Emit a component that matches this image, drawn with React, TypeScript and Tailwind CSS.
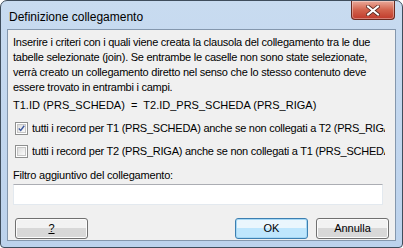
import React from 'react';

const body = { fontFamily: '"Liberation Sans", Arial, sans-serif' };

function CloseButton() {
    return (
        <div className="w-[44px] h-[19px] rounded-b-[4px] border border-[#6b2a1f] border-t-0 bg-gradient-to-b from-[#e9a99a] via-[#d2624c] to-[#c0392b] flex items-center justify-center shadow-[inset_0_0_0_1px_rgba(255,255,255,0.35)]">
            <svg width="14" height="11" viewBox="0 0 14 11">
                <path d="M2 1.5 L12 9.5 M12 1.5 L2 9.5" stroke="#5a2a22" strokeWidth="3.6" strokeLinecap="square" />
                <path d="M2 1.5 L12 9.5 M12 1.5 L2 9.5" stroke="#ffffff" strokeWidth="2" strokeLinecap="square" />
            </svg>
        </div>
    );
}

function Checkbox({ checked }: { checked?: boolean }) {
    return (
        <div className="w-[13px] h-[13px] shrink-0 border border-[#8e8f8f] bg-white p-[1px]">
            <div className="w-full h-full border border-[#c6c6c6] bg-gradient-to-br from-[#dcdcdc] to-[#fbfbfb] flex items-center justify-center">
                {checked && (
                    <svg width="9" height="9" viewBox="0 0 9 9">
                        <path d="M1 4.5 L3.5 7 L8 1" fill="none" stroke="#3e5aa0" strokeWidth="1.8" />
                    </svg>
                )}
            </div>
        </div>
    );
}

function Button({ children, primary }: { children: React.ReactNode; primary?: boolean }) {
    return (
        <div
            className={`w-[73px] h-[21px] rounded-[3px] border flex items-center justify-center text-[11px] text-black ${
                primary
                    ? 'border-[#3c7fb1] bg-gradient-to-b from-[#eaf6fd] from-50% to-[#bee6fd] to-50% shadow-[inset_0_0_0_1px_#a6d8f5]'
                    : 'border-[#707070] bg-gradient-to-b from-[#f2f2f2] from-50% to-[#d8d8d8] to-50% shadow-[inset_0_0_0_1px_#fcfcfc]'
            }`}
            style={body}
        >
            {children}
        </div>
    );
}

export default function App() {
    return (
        <div className="w-[403px] h-[248px] rounded-t-[7px] rounded-b-[4px] border border-[#3f4d5c] bg-gradient-to-b from-[#c8dbf0] to-[#bcd2ec] flex flex-col overflow-hidden">
            <div className="h-[28px] shrink-0 flex items-start justify-between pl-[8px] pr-[7px]">
                <div className="pt-[7px] text-[12px] text-black" style={body}>Definizione collegamento</div>
                <CloseButton />
            </div>
            <div className="mx-[6px] mb-[6px] flex-1 border border-[#8497ad] bg-[#f0f0f0] flex flex-col px-[5px] pt-[5px] text-[11px] text-black" style={body}>
                <p className="leading-[15px] tracking-[-0.25px] whitespace-nowrap">
                    Inserire i criteri con i quali viene creata la clausola del collegamento tra le due<br />
                    tabelle selezionate (join). Se entrambe le caselle non sono state selezionate,<br />
                    verrà creato un collegamento diretto nel senso che lo stesso contenuto deve<br />
                    essere trovato in entrambi i campi.
                </p>
                <div className="mt-[3px] leading-[15px] whitespace-pre">T1.ID (PRS_SCHEDA)  =  T2.ID_PRS_SCHEDA (PRS_RIGA)</div>
                <div className="mt-[8px] flex items-center gap-[4px] pl-[2px] pr-[5px] h-[15px]">
                    <Checkbox checked />
                    <div className="whitespace-nowrap overflow-hidden tracking-[-0.25px]">tutti i record per T1 (PRS_SCHEDA) anche se non collegati a T2 (PRS_RIGA)</div>
                </div>
                <div className="mt-[8px] flex items-center gap-[4px] pl-[2px] pr-[5px] h-[15px]">
                    <Checkbox />
                    <div className="whitespace-nowrap overflow-hidden tracking-[-0.25px]">tutti i record per T2 (PRS_RIGA) anche se non collegati a T1 (PRS_SCHEDA)</div>
                </div>
                <div className="mt-[9px] leading-[15px] tracking-[-0.2px]">Filtro aggiuntivo del collegamento:</div>
                <div className="mt-[1px] mr-[7px] h-[21px] shrink-0 bg-white border border-[#e3e9ef] border-t-[#abadb3]" />
                <div className="mt-[13px] flex items-center pl-[2px] pr-[1px]">
                    <Button><span className="underline">?</span></Button>
                    <div className="flex-1" />
                    <Button primary>OK</Button>
                    <div className="w-[8px]" />
                    <Button>Annulla</Button>
                </div>
            </div>
        </div>
    );
}
